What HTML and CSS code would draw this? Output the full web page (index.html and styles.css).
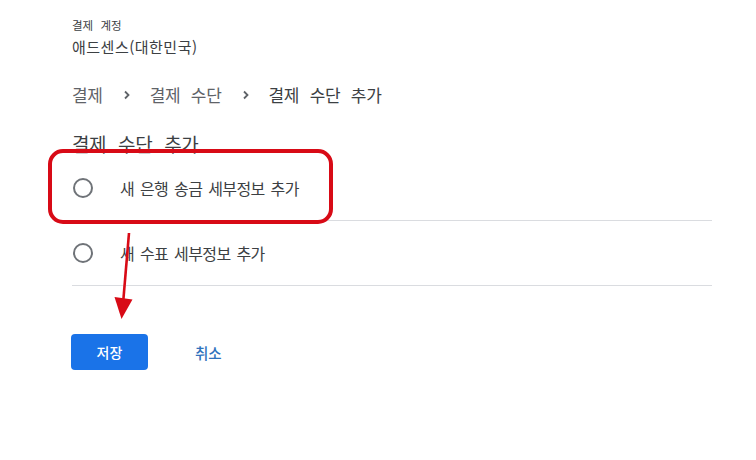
FILE: index.html
```html
<!DOCTYPE html>
<html lang="ko">
<head>
<meta charset="utf-8">
<title>결제 수단 추가</title>
<link rel="stylesheet" href="styles.css">
</head>
<body>
<main class="page">
  <div class="account-label">결제 계정</div>
  <div class="account-name">애드센스(대한민국)</div>
  <nav class="breadcrumb">
    <span class="crumb">결제</span>
    <svg class="chev" width="8" height="10" viewBox="0 0 8 10"><path d="M2 1.5 L5.5 5 L2 8.5" fill="none" stroke="#5f6368" stroke-width="1.8"/></svg>
    <span class="crumb">결제 수단</span>
    <svg class="chev" width="8" height="10" viewBox="0 0 8 10"><path d="M2 1.5 L5.5 5 L2 8.5" fill="none" stroke="#5f6368" stroke-width="1.8"/></svg>
    <span class="crumb current">결제 수단 추가</span>
  </nav>
  <h1 class="heading">결제 수단 추가</h1>
  <div class="options">
    <label class="option"><span class="radio"></span><span class="option-text">새 은행 송금 세부정보 추가</span></label>
    <label class="option"><span class="radio"></span><span class="option-text">새 수표 세부정보 추가</span></label>
  </div>
  <div class="actions">
    <button class="btn-primary">저장</button>
    <button class="btn-text">취소</button>
  </div>
</main>
<svg class="annotation" width="756" height="460" viewBox="0 0 756 460">
  <rect x="50" y="151" width="281" height="71" rx="13" ry="13" fill="none" stroke="#d80a16" stroke-width="4"/>
  <line x1="129" y1="233" x2="123" y2="304" stroke="#d80a16" stroke-width="2.6"/>
  <polygon points="114.5,297 132.5,299.5 121.5,319" fill="#d80a16"/>
</svg>
</body>
</html>
```

FILE: styles.css
```css
html, body {
  margin: 0;
  padding: 0;
  background: #ffffff;
}

body {
  font-family: "Noto Sans CJK KR", "Noto Sans", sans-serif;
  color: #3c4043;
  position: relative;
  width: 756px;
  height: 460px;
  overflow: hidden;
}

.page {
  width: 640px;
  padding: 16px 0 0 72px;
}

.account-label {
  font-size: 11.5px;
  line-height: 18px;
  word-spacing: 4px;
  color: #3c4043;
}

.account-name {
  margin-top: 2px;
  font-size: 15px;
  line-height: 22px;
  letter-spacing: 0.5px;
  color: #3c4043;
}

.breadcrumb {
  margin-top: 25px;
  display: flex;
  align-items: center;
  height: 24px;
  font-size: 17px;
  line-height: 24px;
  letter-spacing: -0.3px;
  word-spacing: 6px;
  color: #5f6368;
}

.crumb.current {
  color: #3c4043;
}

.chev {
  margin: 0 19px 0 20px;
  flex: none;
}

.heading {
  margin: 25px 0 0;
  font-size: 19px;
  font-weight: 400;
  line-height: 24px;
  letter-spacing: -0.4px;
  word-spacing: 7px;
  color: #3c4043;
}

.options {
  display: flex;
  flex-direction: column;
}

.option {
  display: flex;
  align-items: center;
  height: 64px;
  border-bottom: 1px solid #dadce0;
}

.radio {
  box-sizing: border-box;
  width: 20px;
  height: 20px;
  margin-left: 1px;
  border: 2px solid #6f7378;
  border-radius: 50%;
  flex: none;
}

.option-text {
  margin-left: 27px;
  font-size: 16px;
  line-height: 22px;
  letter-spacing: -0.6px;
  word-spacing: 2px;
  color: #3c4043;
}

.actions {
  margin-top: 48px;
  display: flex;
  align-items: center;
}

.btn-primary {
  margin-left: -1px;
  width: 77px;
  height: 36px;
  border: none;
  border-radius: 4px;
  background: #1a73e8;
  color: #ffffff;
  font-family: inherit;
  font-size: 14px;
  font-weight: 500;
  padding: 0;
}

.btn-text {
  margin-left: 23px;
  height: 36px;
  padding: 0 24px;
  border: none;
  background: transparent;
  color: #2f72bd;
  font-family: inherit;
  font-size: 14.5px;
  font-weight: 500;
}

.annotation {
  position: absolute;
  left: 0;
  top: 0;
  pointer-events: none;
}
```
